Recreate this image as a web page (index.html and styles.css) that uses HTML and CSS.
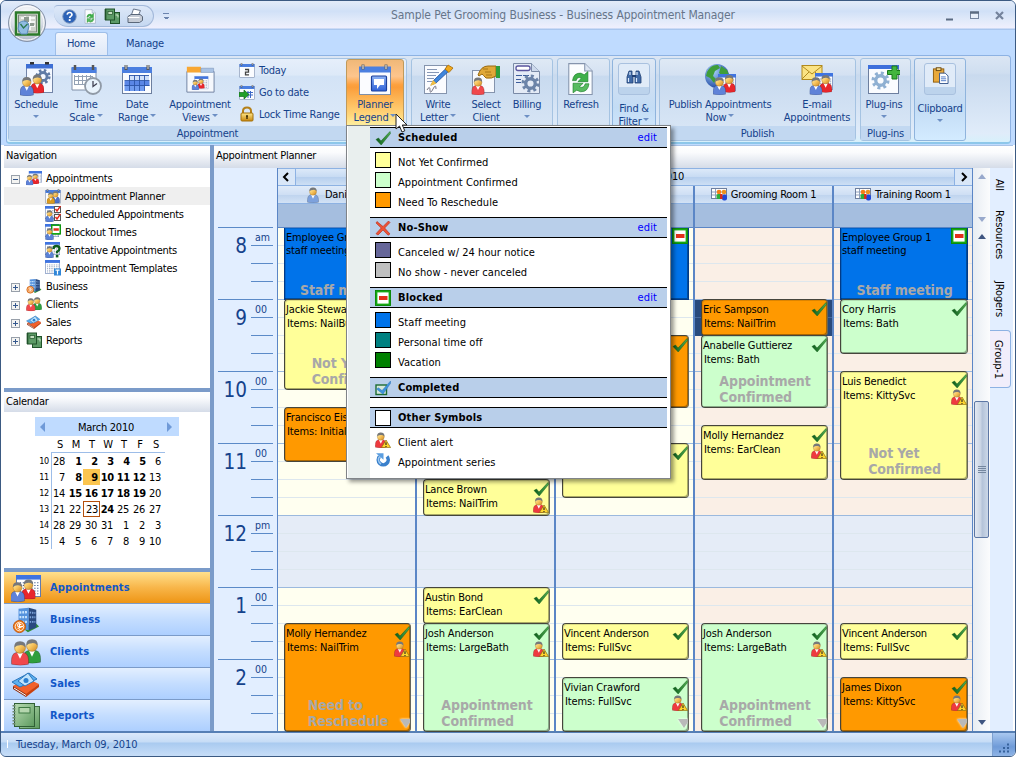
FILE: index.html
```html
<!DOCTYPE html>
<html lang="en">
<head>
<meta charset="utf-8">
<title>Sample Pet Grooming Business - Business Appointment Manager</title>
<link rel="stylesheet" href="styles.css">
</head>
<body>
<svg class="sprite" aria-hidden="true">
  <defs>
    <linearGradient id="gHead" x1="0" y1="0" x2="1" y2="1"><stop offset="0" stop-color="#fff3b0"/><stop offset=".5" stop-color="#f7c35c"/><stop offset="1" stop-color="#c98420"/></linearGradient>
    <linearGradient id="gBlue" x1="0" y1="0" x2="0" y2="1"><stop offset="0" stop-color="#8fb4f5"/><stop offset="1" stop-color="#2f62d8"/></linearGradient>
    <linearGradient id="gGreen" x1="0" y1="0" x2="1" y2="1"><stop offset="0" stop-color="#b9dcb4"/><stop offset="1" stop-color="#5c9a5e"/></linearGradient>
    <linearGradient id="gGold" x1="0" y1="0" x2="0" y2="1"><stop offset="0" stop-color="#ffe98a"/><stop offset="1" stop-color="#c8860c"/></linearGradient>
    <linearGradient id="gCheck" x1="0" y1="0" x2="1" y2="0"><stop offset="0" stop-color="#0c5a1c"/><stop offset="1" stop-color="#4fae4f"/></linearGradient>
    <radialGradient id="gOrb" cx=".5" cy=".3" r=".7"><stop offset="0" stop-color="#fff"/><stop offset=".6" stop-color="#dfe3ea"/><stop offset="1" stop-color="#a9b2c2"/></radialGradient>
    <radialGradient id="gGlobe" cx=".35" cy=".3" r=".8"><stop offset="0" stop-color="#a8d4fa"/><stop offset="1" stop-color="#153c9c"/></radialGradient>
  </defs>
  <symbol id="person" viewBox="0 0 16 22"><path d="M.5 21q-1-9 4-10.500h7q5 1.500 4 10.500q-7 2-15 0z" fill="currentColor" stroke="#0004" stroke-width=".8"/><path d="M5.500 11l2.500 5 2.500-5z" fill="#fff"/><circle cx="8" cy="6.500" r="4.800" fill="url(#gHead)" stroke="#a87828" stroke-width=".5"/><path d="M3 6Q2.600 .6 8 .6T13 6Q10.500 3.600 8 4 5 4 3 6z" fill="#76787a"/></symbol>
  <symbol id="pair" viewBox="0 0 24 22"><use href="#person" x="10" y="0" width="14.500" height="19.500" color="#e8262c"/><use href="#person" x="-.5" y="2.500" width="14.500" height="19.500" color="#5f82d8"/></symbol>
  <symbol id="dots" viewBox="0 0 26 24" preserveAspectRatio="none"><rect x=".5" y=".5" width="25" height="23" fill="#fff" stroke="#5c78b0"/><rect width="26" height="5" fill="#3f74e0"/><path d="M4 8.500h20M4 11.500h20M4 14.500h20M4 17.500h20M4 20.500h20" stroke="#46618f" stroke-width="1.200" stroke-dasharray="1.300 1.700"/></symbol>
  <symbol id="rings" viewBox="0 0 32 32"><rect x="1.500" y="4.500" width="29" height="26" fill="#fafcff" stroke="#6d7f9f"/><rect x="1" y="4" width="30" height="6" fill="#4b7fe0"/><path d="M5 2v5M27 2v5" stroke="#555" stroke-width="3"/><path d="M5 2v4M27 2v4" stroke="#ddd" stroke-width="1"/></symbol>
  <symbol id="gear" viewBox="0 0 20 20"><circle cx="10" cy="10" r="7.500" fill="none" stroke="currentColor" stroke-width="4" stroke-dasharray="2.950 2.950"/><circle cx="10" cy="10" r="5" fill="none" stroke="currentColor" stroke-width="3.500"/></symbol>
  <symbol id="check" viewBox="0 0 16 16"><path d="M1 9.500L3.500 8 6 11 15 1.500 15.500 3.500 6.200 15z" fill="url(#gCheck)" stroke="#17601f" stroke-width=".5"/></symbol>
  <symbol id="alert" viewBox="0 0 16 16"><use href="#person" x="0" y="0" width="11.600" height="16" color="#ee3a3f"/><path d="M11 8l4.600 7.600H6.400z" fill="#ffd52e" stroke="#8a6a10" stroke-width=".7"/><path d="M11 10.300v2.800M11 13.900v1" stroke="#222" stroke-width="1.100"/></symbol>
  <symbol id="block" viewBox="0 0 16 16"><rect x="1.200" y="1.200" width="13.600" height="13.600" fill="#fff" stroke="#14a914" stroke-width="2.400"/><rect x=".4" y=".4" width="15.200" height="15.200" fill="none" stroke="#0a7c0a" stroke-width=".7"/><rect x="4" y="6" width="8.500" height="4" fill="#e2301a"/></symbol>
  <symbol id="cross" viewBox="0 0 16 16"><path d="M2 1.500l6 5L13.500 1 15 2.500 9.700 8 15 14l-2 1.200L8 10l-5 5L1 13.700 6.200 8 1 3z" fill="#ee5237" stroke="#b52a18" stroke-width=".6"/></symbol>
  <symbol id="done" viewBox="0 0 16 16"><rect x="1" y="5" width="10.500" height="9.500" fill="#d4e8dc" stroke="#1d6b32" stroke-width="1.400"/><path d="M1.500 9l2-1.200L7 10.500 15.500 1l.3 2L8 14.200z" fill="#3e93dc" stroke="#2a6dae" stroke-width=".4"/></symbol>
  <symbol id="series" viewBox="0 0 16 16"><path d="M4.500 4.500a5 5 0 1 0 7.500 0" fill="none" stroke="#3a80cc" stroke-width="3.600"/><path d="M5 4a5 5 0 0 0 1 8" fill="none" stroke="#9fcaf2" stroke-width="1.500"/><path d="M1 1.200h7.500v6.500z" fill="#5b9ee0"/></symbol>
  <symbol id="building" viewBox="0 0 30 30"><path d="M8 21l18-2 3 3-12 6z" fill="#2f8e33"/><path d="M7 3l11-1v24l-11-2z" fill="#5592dd"/><path d="M18 2l8 2v19l-8 3z" fill="#29497f"/><path d="M8 7l9-.5M8 12h9M8 17h9" stroke="#cbe6ff" stroke-width="2.500" stroke-dasharray="2 1"/><path d="M19 7l6 .5M19 12h6M19 17h6" stroke="#7ea6dc" stroke-width="2" stroke-dasharray="1.500 1"/><circle cx="8" cy="22" r="6.500" fill="#ef7b1c" stroke="#c0560b"/><circle cx="8" cy="22" r="4.600" fill="none" stroke="#fff" stroke-width=".9"/><path d="M10 20q-4-2-4 .5t4 1.500-4 2M8 18.500v7" stroke="#fff" fill="none" stroke-width="1.100"/></symbol>
  <symbol id="clients" viewBox="0 0 30 27"><use href="#person" x="12" y="0" width="18" height="25" color="#2f9e3d"/><use href="#person" x="0" y="2" width="18" height="25" color="#f0484c"/></symbol>
  <symbol id="sales" viewBox="0 0 30 28"><path d="M2 16l13-8 13 6-13 11z" fill="#f2602a"/><path d="M2 16v3l13 8v-3z" fill="#8e2a0c"/><path d="M15 24v3l13-10v-3z" fill="#c8400f"/><path d="M3 18l12 7.500" stroke="#fff" stroke-width="1"/><path d="M1 12L18 3l8 6-17 8z" fill="#5cb0f0" stroke="#2b77bd"/><path d="M7 11l10-8 6 8-9 5z" fill="#bfe3fc" stroke="#2b77bd"/><circle cx="15" cy="10.500" r="2.500" fill="#2b7fd0"/></symbol>
  <symbol id="books" viewBox="0 0 30 28"><rect x="8.500" y="4.500" width="20" height="22" fill="url(#gGreen)" stroke="#3f6e44"/><rect x="3.500" y="1.500" width="20" height="23" fill="url(#gGreen)" stroke="#2f5f36"/><rect x="8" y="5.500" width="11" height="5.500" fill="#b4d6ae" stroke="#3f7a44"/><path d="M3 3v21" stroke="#6f8a72" stroke-width="3" stroke-dasharray="1.500 1.500"/></symbol>
  <symbol id="booksDark" viewBox="0 0 16 16"><rect x="6.500" y="4.500" width="9" height="11" fill="#5c9a66" stroke="#20522a"/><rect x="1.500" y="1" width="9" height="11" fill="#5c9a66" stroke="#20522a"/><rect x="4" y="3.500" width="4.500" height="3" fill="#c4dfc0" stroke="#20522a" stroke-width=".7"/><path d="M1.500 1.500v10.500" stroke="#20522a" stroke-width="2.400" stroke-dasharray="1 1"/><path d="M11.500 7h2.500v2.500" fill="none" stroke="#cfe6cc"/></symbol>
  <symbol id="apptPair" viewBox="0 0 30 28"><use href="#dots" x="5" y="1" width="25" height="22"/><use href="#pair" x="-.5" y="5" width="25" height="23"/></symbol>
  <symbol id="planner" viewBox="0 0 16 16"><use href="#rings" width="16" height="16"/><use href="#person" x="6" y="2.500" width="9" height="13" color="#4c70c8"/><use href="#person" x="1.500" y="4" width="8.500" height="12" color="#d99a20"/></symbol>
  <symbol id="sched" viewBox="0 0 16 16"><use href="#dots" width="14" height="13"/><rect x="9.500" y=".5" width="6" height="6" fill="#fff" stroke="#555"/><rect x="9.500" y="8.500" width="6" height="6" fill="#fff" stroke="#555"/><path d="M10.500 3l1.500 2L15.500 0M10.500 11l1.500 2L15.500 8" fill="none" stroke="#e0271a" stroke-width="1.400"/><use href="#person" x="0" y="4" width="9" height="12" color="#5b82d6"/></symbol>
  <symbol id="blocked" viewBox="0 0 16 16"><use href="#dots" width="14" height="13"/><use href="#block" x="6" y="0" width="10" height="11"/><use href="#person" x="0" y="4" width="9" height="12" color="#5b82d6"/></symbol>
  <symbol id="tentative" viewBox="0 0 16 16"><use href="#dots" width="15" height="13"/><use href="#person" x="0" y="4" width="9" height="12" color="#5b82d6"/><path d="M8.500 7q0-3 3-3t3 2.800q0 1.600-2.500 3v1.500" fill="none" stroke="#0c5b1d" stroke-width="2.300"/><rect x="10.800" y="12.800" width="2.600" height="2.600" fill="#0c5b1d"/></symbol>
  <symbol id="templ" viewBox="0 0 16 16"><use href="#dots" width="15" height="14"/><rect x="9" y="8.500" width="7" height="7" fill="#2f86d8"/><path d="M10.500 10.200h4M12.500 10v4.500" stroke="#fff" stroke-width="1.200"/></symbol>
  <symbol id="timegrid" viewBox="0 0 32 32"><path d="M2 5h24v22H2z" fill="#fff" stroke="#8090a8"/><rect x="1.500" y="4" width="25" height="6" fill="#4b7fe0"/><path d="M5 2v5M23 2v5" stroke="#555" stroke-width="2.500"/><path d="M4 13.500h19M4 17.500h19M4 21.500h12M4.500 12v10M8.500 12v10M12.500 12v10M16.500 12v10M20.500 12v6" stroke="#94a2b4"/><circle cx="23" cy="23" r="8" fill="#e9f3fc" stroke="#909aa6" stroke-width="1.800"/><path d="M23 18v5.500l4-3" fill="none" stroke="#445" stroke-width="1.300"/></symbol>
  <symbol id="dategrid" viewBox="0 0 32 32"><use href="#rings" width="32" height="32"/><path d="M8 12h20v6H8z" fill="#cfe0fa"/><path d="M3.500 18h25v5h-25z" fill="#5a86e6"/><path d="M3.500 23h20v5h-20z" fill="#6f9bf0"/><path d="M3.500 17.500h25M3.500 22.500h25M8 12.500h20M8.500 12v16M13.500 12v16M18.500 12v16M23.500 12v16" stroke="#2c55a8" stroke-width=".9" fill="none"/></symbol>
  <symbol id="views" viewBox="0 0 32 32"><path d="M2 8h29v22H2z" fill="#f5f8fd" stroke="#6d7f9f"/><path d="M2 3h15v6H2z" fill="#f8a733"/><path d="M17 4.500h13.500V9H17z" fill="#a8c2e4" stroke="#7b93b8" stroke-width=".6"/><path d="M3 10.500h27" stroke="#fff"/><use href="#dots" x="10" y="13" width="15" height="14"/><use href="#pair" x="7" y="15" width="14" height="13"/></symbol>
  <symbol id="schedule" viewBox="0 0 34 34"><rect x="7.500" y="3.500" width="26" height="27" fill="#f4f8ff" stroke="#7285a8"/><rect x="7" y="2" width="27" height="4.500" fill="#3e6fd4"/><path d="M11 1h4M26 1h4" stroke="#333" stroke-width="3"/><use href="#gear" x="16" y="6" width="16" height="17" color="#5f7ba6"/><use href="#pair" x="1" y="12" width="24" height="22"/></symbol>
  <symbol id="cal2" viewBox="0 0 16 16"><use href="#rings" width="16" height="16"/><path d="M6 7.500h3.500v2.700h-3v2.700h3.500" fill="none" stroke="#444" stroke-width="1.300"/></symbol>
  <symbol id="goto" viewBox="0 0 16 16"><use href="#rings" width="16" height="16"/><path d="M8 8.500h6M8 11h6M9 7v7M11.500 7v7" stroke="#3c69c8"/><path d="M0 8.500h5V6l5 4.500L5 15v-2.500H0z" fill="#22a02a" stroke="#116d18" stroke-width=".7"/></symbol>
  <symbol id="lock" viewBox="0 0 16 16"><path d="M4 8V5q0-3.500 4-3.500T12 5v3" fill="none" stroke="#b58018" stroke-width="2"/><rect x="2" y="7" width="12" height="8" rx="1" fill="url(#gGold)" stroke="#a4700a"/><path d="M8 9.500v3.500M7 10h2" stroke="#3c2a04" stroke-width="1.400"/></symbol>
  <symbol id="legend" viewBox="0 0 34 32"><rect x="1.500" y="4.500" width="31" height="27" fill="#fbfcff" stroke="#7f8fa8"/><rect x="1" y="3.500" width="32" height="6" fill="#4b7fe0"/><path d="M5 1.500v5M28 1.500v5" stroke="#666" stroke-width="3"/><path d="M5 2v4M28 2v4" stroke="#eee"/><rect x="13.500" y="13" width="15" height="15" rx="1" fill="url(#gBlue)" stroke="#1b3f9c" stroke-width="1.200"/><path d="M16 16h10v6h-4l-3 4v-4h-3z" fill="#fff"/></symbol>
  <symbol id="write" viewBox="0 0 32 32"><rect x="2.500" y="2.500" width="22" height="28" fill="#fbfcff" stroke="#8594ad"/><path d="M5 6.500h10M5 9.500h12M5 12.500h9M5 15.500h7M5 18.500h6" stroke="#8797b5"/><path d="M5 27q3-5 3 0t3-1 3 0" fill="none" stroke="#667" stroke-width=".9"/><path d="M9 22l3-5L26 3.500l3 2.500L14 20z" fill="#3f86dc" stroke="#1f4e9c" stroke-width=".8"/><path d="M23 6l3-4 5 3-4 4.500z" fill="#f2a91c" stroke="#a46a06" stroke-width=".8"/><path d="M8 23l3-6 3.500 3.500z" fill="#f2bf44"/></symbol>
  <symbol id="select" viewBox="0 0 32 32"><rect x="2.500" y="7.500" width="22" height="22" fill="#f7f9fd" stroke="#8594ad"/><path d="M8 12Q11 3 18 3h8v10q-4 3-10 2-3-3-4-4l-3 2z" fill="#e0a838" stroke="#9a6a10"/><path d="M15 9h6M16 12h6M13 6h5" stroke="#9a6a10" stroke-width=".8"/><rect x="26" y="3" width="4" height="12" fill="#2d9e3c"/><use href="#person" x="1" y="14" width="14" height="18" color="#f0484c"/></symbol>
  <symbol id="billing" viewBox="0 0 32 34"><path d="M2.500 1.500h18l8 8v22h-26z" fill="#e4ebf6" stroke="#7a8aa6"/><path d="M20.500 1.500v8h8" fill="#cdd9ec" stroke="#7a8aa6"/><rect x="5" y="4" width="14" height="4.500" rx="2" fill="#fff" stroke="#59559e" stroke-width="1.300"/><path d="M5 13.500h14M5 17.500h5M5 20.500h5" stroke="#3c5d9c" stroke-dasharray="6 1"/><use href="#gear" x="10" y="12" width="19" height="19" color="#6c84a8"/></symbol>
  <symbol id="page" viewBox="0 0 26 32"><path d="M1.500 1.500h15l7 7v22h-22z" fill="#fbfdff" stroke="#8594ad"/><path d="M16.500 1.500v7h7" fill="#dce5f2" stroke="#8594ad"/><path d="M5 17.500q1-7.500 8-7l3 1.500 3.500-3v9.500h-9.500l3.300-3.200q-3.800-2-4.800 2.200z" fill="#3eb049" stroke="#1d7f2b" stroke-width=".6"/><path d="M20.500 20.500q-1 8-8 7.500l-3.500-1.500-3.500 2.500V20H15l-3.500 3.200q4 2.200 5.500-2.700z" fill="#58bb60" stroke="#1d7f2b" stroke-width=".6"/></symbol>
  <symbol id="binoc" viewBox="0 0 16 14"><path d="M3 1h3v4l1 2v6H1V7zM10 1h3l2 6v6H9V7l1-2z" fill="#3f69a6" stroke="#1f3f74" stroke-width=".8"/><path d="M6 6h4" stroke="#1f3f74" stroke-width="2"/><path d="M2.500 8v4M10.500 8v4M4 2v3M11 2v3" stroke="#dcebff" stroke-width="1.200"/></symbol>
  <symbol id="publish" viewBox="0 0 32 32"><circle cx="13" cy="13" r="12" fill="url(#gGlobe)"/><path d="M3 9q4-8 11-7l2 3-5 3-2 5 3 3-2 4-4-5-4-2zM17 3l6 4 2 5-5 2-5-4z" fill="#3f9e3a"/><use href="#dots" x="14" y="11" width="18" height="17"/><use href="#pair" x="9" y="11.500" width="22.500" height="20.500"/></symbol>
  <symbol id="email" viewBox="0 0 32 32"><rect x="1" y="2.500" width="20" height="14" fill="#fbe383" stroke="#b28a1c"/><path d="M1 3l10 8L21 3M1 16l7-7M21 16l-7-7" fill="none" stroke="#b28a1c"/><use href="#dots" x="14" y="10" width="18" height="17"/><use href="#pair" x="8.500" y="11.500" width="22.500" height="20.500"/></symbol>
  <symbol id="plugin" viewBox="0 0 32 32"><rect x=".5" y="2.500" width="30" height="28" fill="#fafcff" stroke="#6d7f9f"/><rect y="2" width="31" height="4" fill="#3e70dc"/><use href="#gear" x="3" y="8" width="19" height="19" color="#8fb0d2"/><path d="M24 3h5v4.500h4v4h-4V16h-5v-4.500h-4.500v-4H24z" fill="#43b53e" stroke="#18791c"/></symbol>
  <symbol id="clip" viewBox="0 0 17 18"><rect x="1" y="2" width="11" height="14" fill="#e9a93a" stroke="#8f5d0c"/><rect x="4" y=".8" width="5" height="3" fill="#f2d88f" stroke="#6d4a10"/><path d="M7.500 6.500h6l3 3v8h-9z" fill="#fff" stroke="#35558c"/><path d="M9 10.500h5M9 12.500h5.500M9 14.500h5.500" stroke="#4a78c8"/></symbol>
  <symbol id="help" viewBox="0 0 16 16"><circle cx="8" cy="8" r="7.200" fill="#2d63b8" stroke="#7f97bd"/><path d="M5.500 6q.3-2.300 2.600-2.300T10.600 6q0 1-1.400 1.900-1 .6-1 1.700" fill="none" stroke="#fff" stroke-width="1.800"/><rect x="7.200" y="10.800" width="2" height="2" fill="#fff"/></symbol>
  <symbol id="printer" viewBox="0 0 16 16"><path d="M4 8l2.500-7 7 1.500L11 8z" fill="#fff" stroke="#68768c"/><path d="M1 8.500l3-2h9l2.500 2v4l-3 2H1z" fill="#c6ccd6" stroke="#5a6779"/><path d="M1 9.500h11.500" stroke="#fff"/></symbol>
  <symbol id="room" viewBox="0 0 16 13"><rect x=".5" y=".5" width="15" height="10" fill="#fff" stroke="#6d7f9f"/><path d="M1 4h14M1 7h14M4.500 1v9" stroke="#8ea0bd"/><circle cx="8" cy="4" r="2.300" fill="#f57f17"/><circle cx="13" cy="4" r="2.300" fill="#f0901c"/><rect x="5.500" y="6" width="5" height="5" rx="1.500" fill="#2eae39"/><rect x="11" y="6.500" width="5" height="6" rx="2" fill="#1f46d8"/><rect x="9" y="6" width="2.500" height="5" fill="#d42b1c"/></symbol>
  <symbol id="orb" viewBox="0 0 40 40"><circle cx="20" cy="20" r="18.500" fill="url(#gOrb)" stroke="#8592a8"/><circle cx="20" cy="20" r="17" fill="none" stroke="#fff"/><rect x="9" y="9.500" width="23" height="22" fill="#eef1ea" stroke="#2c7a2a" stroke-width="2.500"/><rect x="11.500" y="12" width="18" height="17" fill="#cfd3cc" stroke="#7a867a"/><path d="M14 15h14M14 19h14M14 23h14M18 13v14M23 13v14" stroke="#fff" stroke-width="1.500"/><path d="M17 14h5v5h-5zM23 20h4v3h-4z" fill="#8d9a90"/><path d="M12 20q5-4 9 0l1 3-2 8h-6l-3-5z" fill="#8fbce2" stroke="#5a8ab8"/><path d="M13.500 21l3 4 4-4" fill="none" stroke="#2c7a50" stroke-width="1.300"/></symbol>
</svg>

<div class="window">
  <header class="titlebar">
    <div class="qat">
      <svg class="q15"><use href="#help"/></svg>
      <svg class="q13"><use href="#page"/></svg>
      <svg class="q16"><use href="#booksDark"/></svg>
      <svg class="q16"><use href="#printer"/></svg>
    </div>
    <span class="qat-more"></span>
    <h1>Sample Pet Grooming Business - Business Appointment Manager</h1>
    <svg class="winbtns" viewBox="0 0 56 12"><path d="M1 9.500h7" stroke="#5b6b82" stroke-width="2"/><rect x="25.500" y="2.500" width="8" height="6" fill="#e8effa" stroke="#7585a0"/><path d="M25 2.500h9" stroke="#5b6b82" stroke-width="2.500"/><path d="M51 2l7 7M58 2l-7 7" stroke="#74839c" stroke-width="2.200"/></svg>
  </header>
  <svg class="orb"><use href="#orb"/></svg>

  <nav class="tabs"><span class="tab on">Home</span><span class="tab">Manage</span></nav>

  <section class="ribbon">
    <div class="group g-appt">
      <div class="tools">
        <div class="btn w48"><svg class="i34"><use href="#schedule"/></svg><b>Schedule</b><i class="dd"></i></div>
        <div class="btn w52"><svg class="i32"><use href="#timegrid"/></svg><b>Time</b><b>Scale<i class="dd in"></i></b></div>
        <div class="btn w50"><svg class="i32"><use href="#dategrid"/></svg><b>Date</b><b>Range<i class="dd in"></i></b></div>
        <div class="btn w76"><svg class="i30"><use href="#views"/></svg><b>Appointment</b><b>Views<i class="dd in"></i></b></div>
        <div class="smalls">
          <div><svg class="i16"><use href="#cal2"/></svg>Today</div>
          <div><svg class="i16"><use href="#goto"/></svg>Go to date</div>
          <div><svg class="i16"><use href="#lock"/></svg>Lock Time Range</div>
        </div>
        <div class="btn hot"><svg class="i34"><use href="#legend"/></svg><b>Planner</b><b>Legend<i class="dd in"></i></b></div>
      </div>
      <div class="label">Appointment</div>
    </div>
    <div class="group g-letter">
      <div class="tools">
        <div class="btn w52"><svg class="i32"><use href="#write"/></svg><b>Write</b><b>Letter<i class="dd in"></i></b></div>
        <div class="btn w44"><svg class="i32"><use href="#select"/></svg><b>Select</b><b>Client</b></div>
        <div class="btn w38"><svg class="i32"><use href="#billing"/></svg><b>Billing</b><i class="dd"></i></div>
      </div>
      <div class="label"></div>
    </div>
    <div class="group g-refresh">
      <div class="tools"><div class="btn w46"><svg class="i30"><use href="#page"/></svg><b>Refresh</b></div></div>
      <div class="label"></div>
    </div>
    <div class="group g-find flat">
      <div class="frame"><svg class="bin"><use href="#binoc"/></svg></div><b>Find &amp;</b><b>Filter<i class="dd in"></i></b>
    </div>
    <div class="group g-publish">
      <div class="tools">
        <div class="btn w116"><svg class="i32"><use href="#publish"/></svg><b>Publish Appointments</b><b>Now<i class="dd in"></i></b></div>
        <div class="btn w74"><svg class="i32"><use href="#email"/></svg><b>E-mail</b><b>Appointments</b></div>
      </div>
      <div class="label">Publish</div>
    </div>
    <div class="group g-plug">
      <div class="tools"><div class="btn w46"><svg class="i32"><use href="#plugin"/></svg><b>Plug-ins</b><i class="dd"></i></div></div>
      <div class="label">Plug-ins</div>
    </div>
    <div class="group g-clip flat">
      <div class="frame"><svg class="clip"><use href="#clip"/></svg></div><b>Clipboard</b><i class="dd"></i>
    </div>
  </section>

  <main class="content">
    <aside class="side">
      <h2>Navigation</h2>
      <ul class="tree">
        <li><i class="exp minus"></i><svg class="i16"><use href="#apptPair"/></svg>Appointments</li>
        <li class="sub sel"><svg class="i16"><use href="#planner"/></svg>Appointment Planner</li>
        <li class="sub"><svg class="i16"><use href="#sched"/></svg>Scheduled Appointments</li>
        <li class="sub"><svg class="i16"><use href="#blocked"/></svg>Blockout Times</li>
        <li class="sub"><svg class="i16"><use href="#tentative"/></svg>Tentative Appointments</li>
        <li class="sub"><svg class="i16"><use href="#templ"/></svg>Appointment Templates</li>
        <li><i class="exp"></i><svg class="i16"><use href="#building"/></svg>Business</li>
        <li><i class="exp"></i><svg class="i16"><use href="#clients"/></svg>Clients</li>
        <li><i class="exp"></i><svg class="i16"><use href="#sales"/></svg>Sales</li>
        <li><i class="exp"></i><svg class="i16"><use href="#booksDark"/></svg>Reports</li>
      </ul>
      <h2 class="cal-title">Calendar</h2>
      <div class="cal">
        <div class="cal-bar"><i class="tri left"></i>March 2010<i class="tri right"></i></div>
        <div class="dow"><span></span><span>S</span><span>M</span><span>T</span><span>W</span><span>T</span><span>F</span><span>S</span></div>
        <div class="month">
          <div class="weeks"><span>10</span><span>11</span><span>12</span><span>13</span><span>14</span><span>15</span></div>
          <div class="days">
            <span>28</span><b>1</b><b>2</b><b>3</b><b>4</b><b>5</b><span>6</span>
            <span>7</span><b>8</b><b class="cur">9</b><b>10</b><b>11</b><b>12</b><span>13</span>
            <span>14</span><b>15</b><b>16</b><b>17</b><b>18</b><b>19</b><span>20</span>
            <span>21</span><span>22</span><span class="today">23</span><b>24</b><span>25</span><span>26</span><span>27</span>
            <span>28</span><span>29</span><span>30</span><span>31</span><span>1</span><span>2</span><span>3</span>
            <span>4</span><span>5</span><span>6</span><span>7</span><span>8</span><span>9</span><span>10</span>
          </div>
        </div>
      </div>
      <div class="navbtns">
        <div class="nb on"><svg><use href="#apptPair"/></svg>Appointments</div>
        <div class="nb"><svg><use href="#building"/></svg>Business</div>
        <div class="nb"><svg><use href="#clients"/></svg>Clients</div>
        <div class="nb"><svg><use href="#sales"/></svg>Sales</div>
        <div class="nb"><svg><use href="#books"/></svg>Reports</div>
      </div>
    </aside>

    <section class="planner">
      <h2>Appointment Planner</h2>
      <div class="board">
        <div class="ruler">
          <div class="hr"><span>8</span><em>am</em></div>
          <div class="hr"><span>9</span><em>00</em></div>
          <div class="hr"><span>10</span><em>00</em></div>
          <div class="hr"><span>11</span><em>00</em></div>
          <div class="hr"><span>12</span><em>pm</em></div>
          <div class="hr"><span>1</span><em>00</em></div>
          <div class="hr"><span>2</span><em>00</em></div>
        </div>
        <div class="sheet">
          <div class="datebar"><span class="go"><svg viewBox="0 0 8 10"><path d="M6 1L2 5l4 4" fill="none" stroke="#000" stroke-width="2"/></svg></span><span class="date">Tuesday, March 09, 2010</span><span class="go end"><svg viewBox="0 0 8 10"><path d="M2 1l4 4-4 4" fill="none" stroke="#000" stroke-width="2"/></svg></span></div>
          <div class="cols">
            <div class="col">
              <div class="res first"><svg class="who"><use href="#person"/></svg>Daniel Smith</div><div class="allday"></div>
              <div class="slots">
                <div class="ev blue r1-4"><p>Employee Group 1</p><p>staff meeting</p><strong>Staff meeting</strong></div>
                <div class="ev yellow r5-9"><p>Jackie Stewart</p><p>Items: NailBuff</p><strong>Not Yet<br>Confirmed</strong></div>
                <div class="ev orange r11-13"><p>Francisco Eisen</p><p>Items: Initial</p></div>
                <div class="ev orange r23-28"><p>Molly Hernandez</p><p>Items: NailTrim</p><strong>Need to<br>Reschedule</strong><span class="marks"><svg><use href="#check"/></svg><svg><use href="#alert"/></svg></span><i class="more"></i></div>
              </div>
            </div>
            <div class="col">
              <div class="res"></div><div class="allday"></div>
              <div class="slots">
                <div class="ev yellow r15-16"><p>Lance Brown</p><p>Items: NailTrim</p><span class="marks"><svg><use href="#check"/></svg><svg><use href="#alert"/></svg></span></div>
                <div class="ev yellow r21-22"><p>Austin Bond</p><p>Items: EarClean</p><span class="marks"><svg><use href="#check"/></svg></span></div>
                <div class="ev green r23-28"><p>Josh Anderson</p><p>Items: LargeBath</p><strong>Appointment<br>Confirmed</strong><span class="marks"><svg><use href="#check"/></svg><svg><use href="#alert"/></svg></span></div>
              </div>
            </div>
            <div class="col">
              <div class="res"></div><div class="allday"></div>
              <div class="slots">
                <div class="ev blue r1-4"><span class="marks"><svg><use href="#block"/></svg></span></div>
                <div class="ev orange r7-10"><span class="marks"><svg><use href="#check"/></svg></span></div>
                <div class="ev yellow r13-15"><span class="marks"><svg><use href="#check"/></svg></span></div>
                <div class="ev yellow r23-24"><p>Vincent Anderson</p><p>Items: FullSvc</p><span class="marks"><svg><use href="#check"/></svg></span></div>
                <div class="ev green r26-28"><p>Vivian Crawford</p><p>Items: FullSvc</p><span class="marks"><svg><use href="#check"/></svg><svg><use href="#alert"/></svg></span><i class="more"></i></div>
              </div>
            </div>
            <div class="col room">
              <div class="res"><svg class="rm"><use href="#room"/></svg>Grooming Room 1</div><div class="allday"></div>
              <div class="slots">
                <div class="picked"></div>
                <div class="ev orange r5-6"><p>Eric Sampson</p><p>Items: NailTrim</p><span class="marks"><svg><use href="#check"/></svg></span></div>
                <div class="ev green r7-10"><p>Anabelle Guttierez</p><p>Items: Bath</p><strong>Appointment<br>Confirmed</strong><span class="marks"><svg><use href="#check"/></svg></span></div>
                <div class="ev yellow r12-14"><p>Molly Hernandez</p><p>Items: EarClean</p><span class="marks"><svg><use href="#check"/></svg><svg><use href="#alert"/></svg></span></div>
                <div class="ev green r23-28"><p>Josh Anderson</p><p>Items: LargeBath</p><strong>Appointment<br>Confirmed</strong><span class="marks"><svg><use href="#check"/></svg><svg><use href="#alert"/></svg></span><i class="more"></i></div>
              </div>
            </div>
            <div class="col room last">
              <div class="res"><svg class="rm"><use href="#room"/></svg>Training Room 1</div><div class="allday"></div>
              <div class="slots">
                <div class="ev blue r1-4"><p>Employee Group 1</p><p>staff meeting</p><strong>Staff meeting</strong><span class="marks"><svg><use href="#block"/></svg></span></div>
                <div class="ev green r5-7"><p>Cory Harris</p><p>Items: Bath</p><span class="marks"><svg><use href="#check"/></svg></span></div>
                <div class="ev yellow r9-14"><p>Luis Benedict</p><p>Items: KittySvc</p><strong>Not Yet<br>Confirmed</strong><span class="marks"><svg><use href="#check"/></svg><svg><use href="#alert"/></svg></span></div>
                <div class="ev yellow r23-24"><p>Vincent Anderson</p><p>Items: FullSvc</p><span class="marks"><svg><use href="#check"/></svg></span></div>
                <div class="ev orange r26-28"><p>James Dixon</p><p>Items: KittySvc</p><span class="marks"><svg><use href="#check"/></svg><svg><use href="#alert"/></svg></span><i class="more"></i></div>
              </div>
            </div>
          </div>
        </div>
        <div class="scroll">
          <i class="tri up pale"></i><i class="tri down pale"></i><i class="tri up"></i>
          <div class="thumb"><i></i></div>
          <i class="tri down last"></i>
        </div>
        <div class="vtabs"><span class="t1">All</span><span class="t2">Resources</span><span class="t3">JRogers</span><span class="t4">Group-1</span></div>
      </div>
    </section>
  </main>

  <footer class="status"><i class="grip"></i><span>Tuesday, March 09, 2010</span><div class="size"><svg viewBox="0 0 12 12"><path d="M9 2.500h2M5 6h2M9 6h2M1 9.500h2M5 9.500h2M9 9.500h2" stroke="#37629c" stroke-width="2"/></svg></div></footer>

  <div class="menu">
    <h3><svg><use href="#check"/></svg>Scheduled<a>edit</a></h3>
    <ul>
      <li><i class="sw yellow"></i>Not Yet Confirmed</li>
      <li><i class="sw green"></i>Appointment Confirmed</li>
      <li><i class="sw orange"></i>Need To Reschedule</li>
    </ul>
    <h3><svg><use href="#cross"/></svg>No-Show<a>edit</a></h3>
    <ul>
      <li><i class="sw slate"></i>Canceled w/ 24 hour notice</li>
      <li><i class="sw silver"></i>No show - never canceled</li>
    </ul>
    <h3><svg><use href="#block"/></svg>Blocked<a>edit</a></h3>
    <ul>
      <li><i class="sw blue"></i>Staff meeting</li>
      <li><i class="sw teal"></i>Personal time off</li>
      <li><i class="sw forest"></i>Vacation</li>
    </ul>
    <h3><svg><use href="#done"/></svg>Completed</h3>
    <h3 class="other"><i class="sw white"></i>Other Symbols</h3>
    <ul>
      <li><svg><use href="#alert"/></svg>Client alert</li>
      <li><svg><use href="#series"/></svg>Appointment series</li>
    </ul>
  </div>
  <svg class="cursor" viewBox="0 0 14 20"><path d="M1 1v15l3.500-3 2.500 6 2.800-1.200L7.300 12H12z" fill="#fff" stroke="#222"/></svg>
</div>
</body>
</html>
```

FILE: styles.css
```css
* { box-sizing: border-box; }
body, h1, h2, h3, p, ul { margin: 0; padding: 0; }
body { width: 1016px; height: 757px; overflow: hidden; background: #fff; font-family: "DejaVu Sans Condensed", "DejaVu Sans", sans-serif; font-stretch: condensed; font-size: 11px; letter-spacing: -0.25px; color: #000; }
svg { display: block; flex: none; overflow: visible; }
.sprite { position: absolute; width: 0; height: 0; }
ul { list-style: none; }
em, i { font-style: normal; }
.window { position: relative; width: 1016px; height: 757px; display: flex; flex-direction: column; background: #bfdbff; border: 1px solid #3b5a82; border-radius: 6px; overflow: hidden; white-space: nowrap; }
.i16 { width: 16px; height: 16px; }
.i30 { width: 30px; height: 32px; }
.i32 { width: 32px; height: 32px; }
.i34 { width: 34px; height: 34px; }

/* title bar */
.titlebar { height: 29px; display: flex; align-items: flex-start; background: linear-gradient(#e3ecf9 0, #d3e2f7 9px, #d0e0f7 10px, #e3ebfa 20px, #efeffd 27px, #a9c6ee 28px); }
.qat { width: 100px; height: 22px; margin: 4px 0 0 53px; padding-left: 8px; display: flex; align-items: center; gap: 7px; background: linear-gradient(#dde8f8, #c5d8f1); border: 1px solid #a3b9da; border-left: 0; border-radius: 4px 11px 11px 14px; }
.q15 { width: 15px; height: 15px; }
.q13 { width: 13px; height: 15px; }
.q16 { width: 16px; height: 16px; }
.qat-more { width: 6px; height: 7px; margin: 12px 0 0 9px; border-top: 1px solid #6b84ae; background: linear-gradient(#6b84ae, #6b84ae) 50% 3px / 5px 1px no-repeat, linear-gradient(#6b84ae, #6b84ae) 50% 4px / 3px 1px no-repeat; }
h1 { width: 400px; margin: 6px 0 0 194px; text-align: center; font-size: 12px; line-height: 16px; font-weight: 400; color: #66758a; letter-spacing: -0.12px; }
.winbtns { width: 56px; height: 12px; margin: 9px 0 0 182px; }
.orb { position: absolute; left: 6px; top: 2px; width: 40px; height: 40px; }
.tabs { height: 25px; padding: 2px 0 0 54px; display: flex; color: #15428b; }
.tab { height: 23px; padding: 0 18px; line-height: 23px; }
.tab.on { width: 53px; padding: 0; line-height: 21px; text-align: center; text-indent: -1px; background: linear-gradient(#f2f6fd, #dfe9f8); border: 1px solid #9fbfe9; border-bottom: 0; border-radius: 3px 3px 0 0; }

/* ribbon */
.ribbon { height: 89px; margin: 0 4px 1px 5px; padding: 2px 2px 2px 1px; display: flex; gap: 4px; background: linear-gradient(#dbe6f4, #cfdef0 20%, #c9daee 22%, #e0ecfa 90%, #d7f0fb); border: 1px solid #8db2e3; border-bottom: 2px solid #8dc7ea; border-radius: 4px; color: #15428b; }
.group { height: 83px; flex: none; display: flex; flex-direction: column; border: 1px solid #a5c3e2; border-radius: 3px; background: linear-gradient(#dfe9f5, #d4e1f2 20%, #c8daef 21%, #dbe8f7); }
.group b { font-weight: 400; }
.g-appt { width: 399px; background: linear-gradient(#e6effb, #dde9f8 20%, #d3e3f6 21%, #dfebf9); }
.g-letter { width: 142px; }
.g-refresh { width: 53px; }
.g-find { width: 44px; margin-left: -2px; }
.g-publish { width: 197px; margin-left: -1px; }
.g-plug { width: 51px; }
.g-clip { width: 52px; margin-left: -1px; }
.tools { height: 67px; display: flex; padding-left: 3px; }
.label { height: 14px; line-height: 15px; text-align: center; background: #c2d8f1; }
.btn { flex: none; display: flex; flex-direction: column; align-items: center; line-height: 13px; padding-top: 3px; height: 67px; }
.btn svg { height: 34px; margin-bottom: 2px; }
.w38 { width: 38px; } .w44 { width: 44px; } .w46 { width: 46px; } .w48 { width: 48px; } .w50 { width: 50px; } .w52 { width: 52px; } .w74 { width: 74px; } .w76 { width: 76px; } .w116 { width: 116px; }
.g-publish .tools { padding-left: 2px; gap: 2px; }
.g-plug .tools, .g-refresh .tools, .g-letter .tools { padding-left: 0; }
.dd { display: block; width: 0; height: 0; border: 3px solid transparent; border-top: 3px solid #6d8fc4; border-bottom: 0; margin-top: 4px; }
.dd.in { display: inline-block; margin: 0 0 4px 2px; }
.smalls { width: 108px; padding-left: 1px; }
.smalls div { display: flex; align-items: center; height: 22px; gap: 4px; }
.hot { width: 58px; margin: 0; height: 67px; padding-top: 2px; background: linear-gradient(#f0b878, #fdc58d 25%, #fda13f 38%, #fb9d3a 42%, #ffd77c 85%, #fff0a0); border: 1px solid #c09a5a; border-radius: 3px 3px 0 0; }
.flat { align-items: center; line-height: 13px; background: linear-gradient(#dfe9f5, #cfdff2 30%, #c3dcf5 60%, #d3ebff); border-color: #8fb4dd; }
.frame { width: 32px; height: 32px; margin: 4px 0 7px; padding: 6px 0 0 7px; border: 1px solid #a9c1df; border-radius: 3px; background: linear-gradient(#e0ebf8 23px, #bcd3ec 23px); }
.bin { width: 16px; height: 14px; }
.clip { width: 17px; height: 17px; margin-top: -3px; }

/* body area */
.content { height: 586px; padding: 0 2px 0 3px; display: flex; background: #fff; }
h2 { height: 23px; padding: 2px 0 0 2px; line-height: 15px; font-size: 11px; font-weight: 400; background: linear-gradient(#fff, #fafbfd 30%, #d5dce8); border-top: 1px solid #a9c3e6; }
.side { width: 210px; display: flex; flex-direction: column; border-right: 4px solid #7b9bc9; }
.tree { height: 220px; padding-top: 1px; background: #fff; }
.tree li { height: 18px; display: flex; align-items: center; gap: 4px; padding: 1px 0 0 7px; line-height: 17px; }
.tree .i16 { margin-left: 2px; margin-top: -1px; }
.tree .sub { padding-left: 39px; }
.tree .sel { background: #efefef; }
.exp { width: 9px; height: 9px; margin-top: 1px; border: 1px solid #98a0aa; background: linear-gradient(#35588e, #35588e) 50% / 5px 1px no-repeat, linear-gradient(#35588e, #35588e) 50% / 1px 5px no-repeat, #f4f4f2; }
.exp.minus { background: linear-gradient(#35588e, #35588e) 50% / 5px 1px no-repeat, #f4f4f2; }
.cal-title { height: 24px; border-top: 4px solid #7b9bc9; }
.cal { height: 156px; padding: 5px 0 0 31px; background: #fff; }
.cal-bar { width: 144px; height: 19px; display: flex; align-items: center; justify-content: space-between; padding: 1px 7px 0 5px; background: #bfdbff; }
.tri { width: 0; height: 0; border: 5px solid transparent; }
.tri.left { border-right-color: #6f9ad8; border-left: 0; }
.tri.right { border-left-color: #6f9ad8; border-right: 0; }
.dow { display: grid; grid-template-columns: 15px repeat(7, 16px); height: 16px; line-height: 18px; text-align: center; padding-left: 2px; }
.month { display: flex; }
.weeks { width: 16px; padding: 1px 2px 0 0; display: grid; grid-auto-rows: 16px; line-height: 17px; font-size: 9px; text-align: right; }
.days { display: grid; grid-template-columns: repeat(7, 16px); grid-auto-rows: 16px; border-top: 1px solid #9dbde8; border-left: 1px solid #9dbde8; width: 114px; }
.days > * { padding-right: 3px; line-height: 17px; text-align: right; direction: rtl; margin-left: -1px; }
.days b { padding-right: 2px; font-size: 11px; letter-spacing: -0.2px; }
.days .cur { background: #fbc54f; }
.days .today { border: 1px solid #b5500c; padding-right: 1px; line-height: 15px; }
.navbtns { border-top: 4px solid #7b9bc9; background: #7b9bc9; display: flex; flex-direction: column; gap: 1px; }
.nb { height: 31px; display: flex; align-items: center; gap: 9px; padding-left: 7px; font-weight: 700; letter-spacing: 0.1px; color: #1157c8; background: linear-gradient(#e3efff, #c4ddff 50%, #adcfff); }
.nb svg { width: 30px; height: 28px; }
.nb.on { background: linear-gradient(#ffe08c, #f8b64a 50%, #ee9515); }

/* planner */
.planner { flex: 1; min-width: 0; }
.board { display: flex; height: 563px; background: #e2eeff; }
.ruler { width: 64px; padding-top: 59px; border-right: 1px solid #5b86c6; }
.hr { height: 72px; display: flex; justify-content: flex-end; padding-right: 4px; color: #15428b; background-image: linear-gradient(#5b8ac8, #5b8ac8), linear-gradient(transparent 18px, #5b8ac8 18px 19px, transparent 19px 36px, #5b8ac8 36px 37px, transparent 37px 54px, #5b8ac8 54px 55px, transparent 55px); background-size: 55px 1px, 22px 72px; background-position: 4px 0, 37px 0; background-repeat: no-repeat; }
.hr span { font-size: 20.500px; line-height: 39px; letter-spacing: 0; margin-right: 8px; }
.hr em { width: 18px; line-height: 20px; letter-spacing: 0; font-size: 10.500px; }
.sheet { width: 695px; border-right: 1px solid #5b86c6; }
.datebar { height: 18px; display: flex; border: solid #8db2e3; border-width: 1px 0; background: linear-gradient(#dce9f9, #c7dbf3 50%, #b6cfee 51%, #cddff4); line-height: 16px; }
.go { width: 18px; padding: 3px 0 0 4px; border-right: 1px solid #8db2e3; background: #d9e7f8; }
.go.end { padding-left: 5px; border-right: 0; border-left: 1px solid #8db2e3; }
.go svg { width: 8px; height: 10px; }
.date { flex: 1; text-align: center; }
.cols { display: grid; grid-template-columns: repeat(4, 139px) 138px; }
.col { border-right: 2px solid #5b86c6; }
.col.last { border-right: 0; }
.res { height: 18px; display: flex; align-items: center; justify-content: center; gap: 4px; border-bottom: 1px solid #8db2e3; background: linear-gradient(#e0ebf9, #cfdff4 50%, #bed3ee 51%, #d3e2f5); }
.res.first { justify-content: flex-start; gap: 6px; padding-left: 29px; }
.who { width: 12px; height: 16px; color: #7da1dc; }
.rm { width: 16px; height: 13px; }
.allday { height: 24px; border-bottom: 1px solid #5b86c6; background: #a5bedf; }
.slots { --bg: #fffff0; height: 504px; display: grid; grid-template-rows: repeat(28, 18px); grid-template-columns: 6px 127px 1fr; background: linear-gradient(transparent 71px, #9bb9de 71px) 0 0 / 100% 72px, linear-gradient(transparent 17px, #dde7ee 17px) 0 0 / 100% 18px, linear-gradient(var(--bg) 288px, #e5ecf7 288px 360px, var(--bg) 360px); }
.room .slots { --bg: #faefe6; }
.last .slots { grid-template-columns: 6px 128px 1fr; }
.picked { grid-row: 5 / 7; grid-column: 1 / -1; background: linear-gradient(transparent 17px, #46689c 17px 18px, transparent 18px), #294a7c; }
.ev { position: relative; grid-column: 2; margin-top: -1px; padding: 3px 0 0 1px; display: flex; flex-direction: column; border: 1px solid #45453c; border-right-color: #66665a; border-radius: 4px; box-shadow: inset -1px -1px 0 #0005, inset 1px 1px 0 #0002; line-height: 14px; overflow: hidden; }
.ev p { letter-spacing: -0.15px; }
.ev p + p { padding-left: 1px; }
.ev strong { margin: auto auto 2px; font-size: 14px; line-height: 16px; letter-spacing: -0.1px; color: #a8a8a8; }
.ev.blue { margin-top: 0; line-height: 13px; border-radius: 0; border-color: #023a86; border-top: 0; }
.ev.blue p + p { padding-left: 0; }
.ev.blue strong { margin-bottom: 1px; }
.marks { position: absolute; right: 0; top: 1px; display: flex; flex-direction: column; }
.marks svg { width: 16px; height: 16px; }
.blue .marks { top: 0; }
.more { position: absolute; right: -2px; bottom: 3px; border: 6px solid transparent; border-top: 9px solid #b9b9b9; border-bottom: 0; filter: drop-shadow(0 0 1px #fff); }
.yellow { background: #ffff99; }
.green { background: #ccffcc; }
.orange { background: #ff9900; }
.blue { background: #0073ea; }
.slate { background: #666699; }
.silver { background: #c0c0c0; }
.teal { background: #008080; }
.forest { background: #008000; }
.white { background: #fff; }
.r1-4 { grid-row: 1 / 5; } .r5-6 { grid-row: 5 / 7; } .r5-7 { grid-row: 5 / 8; } .r5-9 { grid-row: 5 / 10; } .r7-10 { grid-row: 7 / 11; }
.r9-14 { grid-row: 9 / 15; } .r11-13 { grid-row: 11 / 14; } .r12-14 { grid-row: 12 / 15; } .r13-15 { grid-row: 13 / 16; } .r15-16 { grid-row: 15 / 17; }
.r21-22 { grid-row: 21 / 23; } .r23-24 { grid-row: 23 / 25; } .r23-28 { grid-row: 23 / 29; } .r26-28 { grid-row: 26 / 29; }

.scroll { width: 17px; display: flex; flex-direction: column; align-items: center; background: linear-gradient(90deg, #e8edf3, #fbfcfd); }
.scroll .tri { border: 4px solid transparent; flex: none; }
.scroll .tri.up { border-bottom: 5px solid #3f5580; border-top: 0; }
.scroll .tri.down { border-top: 5px solid #3f5580; border-bottom: 0; }
.scroll .pale.up { border-bottom-color: #98a9cc; margin-top: 6px; }
.scroll .pale.down { border-top-color: #98a9cc; margin: 38px 0 12px; }
.thumb { width: 15px; height: 137px; margin-top: 162px; display: flex; align-items: center; justify-content: center; border: 1px solid #5d77a4; border-radius: 2px; background: linear-gradient(90deg, #e3e9f2, #c9d4e4 45%, #b4c3d9 55%, #ccd8e8); }
.thumb i { width: 8px; height: 8px; background: repeating-linear-gradient(#75879f 0 1px, transparent 1px 2px); }
.scroll .tri.last { margin-top: 182px; }
.vtabs { flex: 1; display: flex; flex-direction: column; align-items: flex-start; padding-top: 8px; }
.vtabs span { writing-mode: vertical-rl; width: 21px; line-height: 23px; text-align: center; letter-spacing: -0.15px; }
.t1 { height: 18px; }
.t2 { height: 54px; margin-top: 14px; }
.t3 { height: 42px; margin-top: 16px; }
.t4 { height: 58px; margin-top: 10px; background: #f1eefb; border: 1px solid #8db2e3; border-left: 0; border-radius: 0 4px 4px 0; }

.status { height: 26px; flex: 1; display: flex; align-items: center; padding-left: 6px; color: #15428b; border-top: 2px solid #567fb5; background: linear-gradient(#dbe9fb, #c6dcf6 9px, #a9caf0 10px, #c5dcf7 22px); letter-spacing: -0.1px; }
.grip { width: 1px; height: 8px; background: #fff; margin: 0 8px 2px 0; }
.size { width: 23px; height: 100%; margin-left: auto; padding: 9px 0 0 5px; border-left: 1px solid #7ca0d0; background: linear-gradient(#a9c8f0, #6f9bd8 60%, #8fb4e6); }
.size svg { width: 12px; height: 12px; }

/* drop-down legend */
.menu { position: absolute; left: 345px; top: 124px; width: 325px; height: 354px; padding: 1px 3px 0 23px; border: 1px solid #808488; background: linear-gradient(90deg, #fff 1px, #e9efee 1px 23px, #fff 23px); box-shadow: 3px 3px 4px #0006; letter-spacing: 0.05px; }
.menu h3 { height: 21px; display: flex; align-items: center; padding: 0 10px 0 5px; gap: 7px; border: solid #000; border-width: 1px 0; background: #b9cfea; font-size: 11px; letter-spacing: 0.15px; }
.menu svg { width: 16px; height: 16px; }
.menu a { margin-left: auto; font-weight: 400; color: #00f; letter-spacing: 0.1px; }
.menu ul { padding: 4px 0 5px 5px; }
.menu li { height: 20px; display: flex; gap: 7px; line-height: 21px; }
.menu .other { margin-top: 9px; }
.sw { width: 16px; height: 16px; flex: none; border: 1px solid #000; }
.cursor { position: absolute; left: 394px; top: 112px; width: 14px; height: 20px; }
```
